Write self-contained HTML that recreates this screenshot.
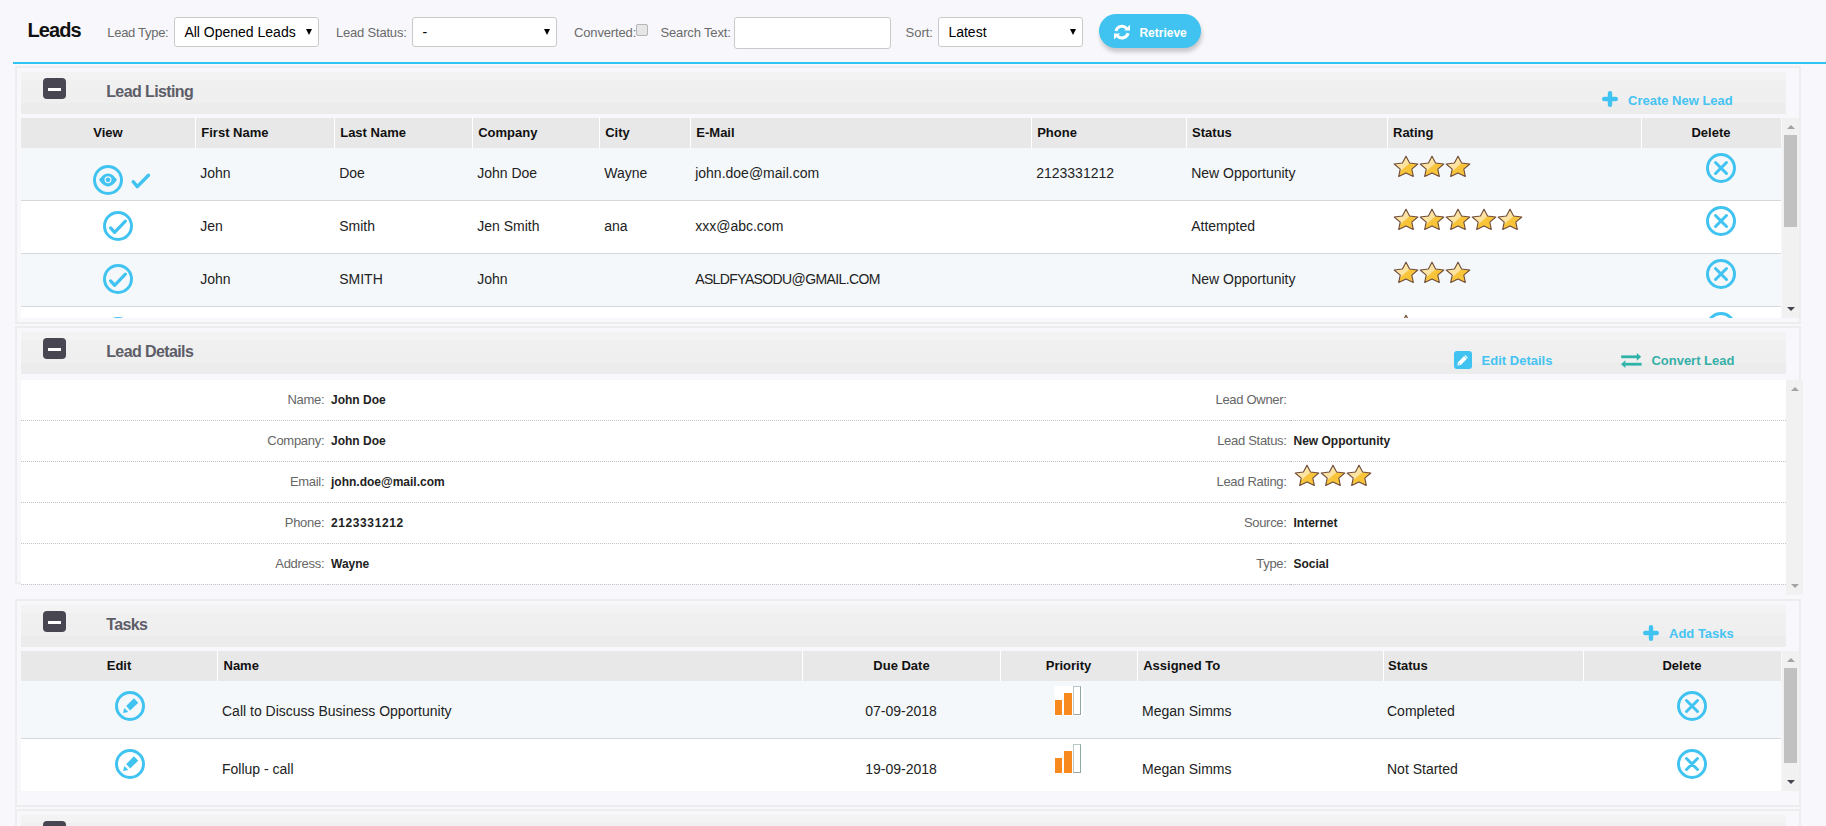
<!DOCTYPE html><html><head><meta charset="utf-8"><style>html,body{margin:0;padding:0;}body{width:1826px;height:826px;overflow:hidden;position:relative;background:#f8f8fc;font-family:"Liberation Sans",sans-serif;}.t{position:absolute;white-space:nowrap;}.b{position:absolute;}</style></head><body>
<svg width="0" height="0" style="position:absolute"><defs>
<linearGradient id="sg" x1="0" y1="0" x2="1" y2="1"><stop offset="0.48" stop-color="#fde3a2"/><stop offset="0.52" stop-color="#f8c43a"/></linearGradient>
<path id="star" d="M13.0 1.2 L16.6 8.0 L24.8 9.0 L18.8 14.1 L20.3 21.4 L13.0 17.9 L5.7 21.4 L7.2 14.1 L1.2 9.0 L9.4 8.0Z"/>
</defs></svg>
<div class="t" style="left:27.5px;top:18.07px;font-size:20px;line-height:24px;font-weight:700;color:#111;letter-spacing:-0.9px;">Leads</div>
<div class="t" style="left:107.3px;top:24.50px;font-size:13px;line-height:16px;font-weight:400;color:#6a6a6a;letter-spacing:-0.3px;">Lead Type:</div>
<div class="b" style="left:174px;top:17px;width:145px;height:30px;background:#fff;border:1px solid #c9c9c9;border-radius:3px;box-sizing:border-box;"></div>
<div class="t" style="left:184.4px;top:23.65px;font-size:14px;line-height:17px;font-weight:400;color:#000;letter-spacing:0px;">All Opened Leads</div>
<div class="b" style="left:306px;top:29px;width:0;height:0;border-left:3px solid transparent;border-right:3px solid transparent;border-top:6px solid #000;"></div>
<div class="t" style="left:336px;top:24.50px;font-size:13px;line-height:16px;font-weight:400;color:#6a6a6a;letter-spacing:-0.2px;">Lead Status:</div>
<div class="b" style="left:412px;top:17px;width:145px;height:30px;background:#fff;border:1px solid #c9c9c9;border-radius:3px;box-sizing:border-box;"></div>
<div class="t" style="left:422.4px;top:23.65px;font-size:14px;line-height:17px;font-weight:400;color:#000;letter-spacing:0px;">-</div>
<div class="b" style="left:544px;top:29px;width:0;height:0;border-left:3px solid transparent;border-right:3px solid transparent;border-top:6px solid #000;"></div>
<div class="t" style="left:574px;top:24.50px;font-size:13px;line-height:16px;font-weight:400;color:#6a6a6a;letter-spacing:-0.15px;">Converted:</div>
<div class="b" style="left:636px;top:24px;width:12px;height:12px;background:#e6e6e6;border:1px solid #b5b5b5;border-radius:2px;box-sizing:border-box;"></div>
<div class="t" style="left:660.5px;top:24.50px;font-size:13px;line-height:16px;font-weight:400;color:#6a6a6a;letter-spacing:-0.15px;">Search Text:</div>
<div class="b" style="left:734px;top:17px;width:157px;height:32px;background:#fff;border:1px solid #c9c9c9;border-radius:3px;box-sizing:border-box;"></div>
<div class="t" style="left:905.5px;top:24.50px;font-size:13px;line-height:16px;font-weight:400;color:#6a6a6a;letter-spacing:0px;">Sort:</div>
<div class="b" style="left:938px;top:17px;width:145px;height:30px;background:#fff;border:1px solid #c9c9c9;border-radius:3px;box-sizing:border-box;"></div>
<div class="t" style="left:948.4px;top:23.65px;font-size:14px;line-height:17px;font-weight:400;color:#000;letter-spacing:0px;">Latest</div>
<div class="b" style="left:1070px;top:29px;width:0;height:0;border-left:3px solid transparent;border-right:3px solid transparent;border-top:6px solid #000;"></div>
<div class="b" style="left:1099px;top:14px;width:102px;height:34px;background:#40c3f0;border-radius:17px;box-shadow:1px 4px 4px rgba(0,0,0,0.2);"></div>
<svg class="b" style="left:1114px;top:24.4px" width="16" height="16" viewBox="0 0 16 16"><path d="M1.9 7.0 A6.3 6.3 0 0 1 12.8 4.4" fill="none" stroke="#fff" stroke-width="3"/><path d="M16 0.7 L16 6.6 L10.1 6.6Z" fill="#fff"/><path d="M14.1 9.2 A6.3 6.3 0 0 1 3.2 11.8" fill="none" stroke="#fff" stroke-width="3"/><path d="M0 15.6 L0 9.4 L6.2 9.4Z" fill="#fff"/></svg>
<div class="t" style="left:1139.4px;top:25.64px;font-size:12px;line-height:14px;font-weight:700;color:#fff;letter-spacing:0px;">Retrieve</div>
<div class="b" style="left:13px;top:62px;width:1813px;height:2px;background:#2ec3f0;"></div>
<div class="b" style="left:15px;top:66px;width:1786px;height:258px;border:2px solid #ededed;box-sizing:border-box;"></div>
<div class="b" style="left:21px;top:72px;width:1765px;height:42px;background:linear-gradient(#f3f3f3 0,#f3f3f3 8px,#f0f0f0 8px,#efefef 31px,#ececec 31px,#ececec 42px);"></div>
<div class="b" style="left:43px;top:78px;width:23px;height:21px;background:#474651;border-radius:4px;"></div>
<div class="b" style="left:48px;top:87.5px;width:13px;height:3.0px;background:#fff;"></div>
<div class="t" style="left:106.2px;top:81.96px;font-size:16px;line-height:19px;font-weight:700;color:#5d5d68;letter-spacing:-0.6px;">Lead Listing</div>
<svg class="b" style="left:1602px;top:91px" width="16" height="16" viewBox="0 0 16 16"><path d="M8 2.2 V13.8 M2.2 8 H13.8" stroke="#40c3f0" stroke-width="4.4" stroke-linecap="round"/></svg>
<div class="t" style="left:1628px;top:92.50px;font-size:13px;line-height:16px;font-weight:700;color:#45c3f2;letter-spacing:0px;">Create New Lead</div>
<div class="b" style="left:21px;top:118px;width:1760px;height:30px;background:#e8e8e8;"></div>
<div class="b" style="left:195px;top:118px;width:1px;height:30px;background:#fff;"></div>
<div class="b" style="left:334px;top:118px;width:1px;height:30px;background:#fff;"></div>
<div class="b" style="left:472px;top:118px;width:1px;height:30px;background:#fff;"></div>
<div class="b" style="left:599px;top:118px;width:1px;height:30px;background:#fff;"></div>
<div class="b" style="left:690px;top:118px;width:1px;height:30px;background:#fff;"></div>
<div class="b" style="left:1031px;top:118px;width:1px;height:30px;background:#fff;"></div>
<div class="b" style="left:1186px;top:118px;width:1px;height:30px;background:#fff;"></div>
<div class="b" style="left:1387px;top:118px;width:1px;height:30px;background:#fff;"></div>
<div class="b" style="left:1641px;top:118px;width:1px;height:30px;background:#fff;"></div>
<div class="t" style="left:-192px;width:600px;text-align:center;top:124.50px;font-size:13px;line-height:16px;font-weight:700;color:#111;letter-spacing:0px;">View</div>
<div class="t" style="left:201.3px;top:124.50px;font-size:13px;line-height:16px;font-weight:700;color:#111;letter-spacing:0px;">First Name</div>
<div class="t" style="left:340.2px;top:124.50px;font-size:13px;line-height:16px;font-weight:700;color:#111;letter-spacing:0px;">Last Name</div>
<div class="t" style="left:478.2px;top:124.50px;font-size:13px;line-height:16px;font-weight:700;color:#111;letter-spacing:0px;">Company</div>
<div class="t" style="left:605.2px;top:124.50px;font-size:13px;line-height:16px;font-weight:700;color:#111;letter-spacing:0px;">City</div>
<div class="t" style="left:696.3px;top:124.50px;font-size:13px;line-height:16px;font-weight:700;color:#111;letter-spacing:0px;">E-Mail</div>
<div class="t" style="left:1037.2px;top:124.50px;font-size:13px;line-height:16px;font-weight:700;color:#111;letter-spacing:0px;">Phone</div>
<div class="t" style="left:1192.1px;top:124.50px;font-size:13px;line-height:16px;font-weight:700;color:#111;letter-spacing:0px;">Status</div>
<div class="t" style="left:1393px;top:124.50px;font-size:13px;line-height:16px;font-weight:700;color:#111;letter-spacing:0px;">Rating</div>
<div class="t" style="left:1411px;width:600px;text-align:center;top:124.50px;font-size:13px;line-height:16px;font-weight:700;color:#111;letter-spacing:0px;">Delete</div>
<div class="b" style="left:0;top:148px;width:1826px;height:170px;overflow:hidden;">
<div class="b" style="left:21px;top:0px;width:1760px;height:52px;background:#f4f8fb;border-bottom:1px solid #d8d8d8;"></div>
<div class="t" style="left:200.2px;top:16.65px;font-size:14px;line-height:17px;font-weight:400;color:#222;letter-spacing:0px;">John</div>
<div class="t" style="left:339.2px;top:16.65px;font-size:14px;line-height:17px;font-weight:400;color:#222;letter-spacing:0px;">Doe</div>
<div class="t" style="left:477.2px;top:16.65px;font-size:14px;line-height:17px;font-weight:400;color:#222;letter-spacing:0px;">John Doe</div>
<div class="t" style="left:604.2px;top:16.65px;font-size:14px;line-height:17px;font-weight:400;color:#222;letter-spacing:0px;">Wayne</div>
<div class="t" style="left:695.2px;top:16.65px;font-size:14px;line-height:17px;font-weight:400;color:#222;letter-spacing:0px;">john.doe@mail.com</div>
<div class="t" style="left:1036.2px;top:16.65px;font-size:14px;line-height:17px;font-weight:400;color:#222;letter-spacing:0px;">2123331212</div>
<div class="t" style="left:1191.2px;top:16.65px;font-size:14px;line-height:17px;font-weight:400;color:#222;letter-spacing:0px;">New Opportunity</div>
<svg class="b" style="left:92px;top:16px" width="32" height="32" viewBox="0 0 32 32"><circle cx="16" cy="16" r="13.5" fill="none" stroke="#40c3f0" stroke-width="3"/><path d="M7 15.8 C9.5 12.2 12.5 9.4 16 9.4 C19.5 9.4 22.5 12.2 25 15.8 C22.5 19.6 19.5 22.4 16 22.4 C12.5 22.4 9.5 19.6 7 15.8Z" fill="#40c3f0"/><circle cx="16" cy="15.8" r="2.9" fill="none" stroke="#f4f8fb" stroke-width="1.1"/></svg>
<svg class="b" style="left:130px;top:24px" width="21" height="17" viewBox="0 0 21 17"><path d="M3.2 9.7 L7.3 14.6 L18.5 3.2" fill="none" stroke="#40c3f0" stroke-width="3.4" stroke-linecap="round" stroke-linejoin="round"/></svg>
<svg class="b" style="left:1393px;top:7px" width="26" height="23" viewBox="0 0 26 23"><use href="#star" fill="url(#sg)" stroke="#6e4b3a" stroke-width="1.1" stroke-linejoin="round"/></svg>
<svg class="b" style="left:1419px;top:7px" width="26" height="23" viewBox="0 0 26 23"><use href="#star" fill="url(#sg)" stroke="#6e4b3a" stroke-width="1.1" stroke-linejoin="round"/></svg>
<svg class="b" style="left:1445px;top:7px" width="26" height="23" viewBox="0 0 26 23"><use href="#star" fill="url(#sg)" stroke="#6e4b3a" stroke-width="1.1" stroke-linejoin="round"/></svg>
<svg class="b" style="left:1705px;top:4px" width="32" height="32" viewBox="0 0 32 32"><circle cx="16" cy="16" r="13.5" fill="none" stroke="#40c3f0" stroke-width="3"/><path d="M10.5 10.5 L21.5 21.5 M21.5 10.5 L10.5 21.5" fill="none" stroke="#40c3f0" stroke-width="3" stroke-linecap="round"/></svg>
<div class="b" style="left:21px;top:53px;width:1760px;height:52px;background:#fff;border-bottom:1px solid #d8d8d8;"></div>
<div class="t" style="left:200.2px;top:69.65px;font-size:14px;line-height:17px;font-weight:400;color:#222;letter-spacing:0px;">Jen</div>
<div class="t" style="left:339.2px;top:69.65px;font-size:14px;line-height:17px;font-weight:400;color:#222;letter-spacing:0px;">Smith</div>
<div class="t" style="left:477.2px;top:69.65px;font-size:14px;line-height:17px;font-weight:400;color:#222;letter-spacing:0px;">Jen Smith</div>
<div class="t" style="left:604.2px;top:69.65px;font-size:14px;line-height:17px;font-weight:400;color:#222;letter-spacing:0px;">ana</div>
<div class="t" style="left:695.2px;top:69.65px;font-size:14px;line-height:17px;font-weight:400;color:#222;letter-spacing:0px;">xxx@abc.com</div>
<div class="t" style="left:1191.2px;top:69.65px;font-size:14px;line-height:17px;font-weight:400;color:#222;letter-spacing:0px;">Attempted</div>
<svg class="b" style="left:102px;top:62px" width="32" height="32" viewBox="0 0 32 32"><circle cx="16" cy="16" r="13.5" fill="none" stroke="#40c3f0" stroke-width="3"/><path d="M8.6 17.9 L12.6 22.4 L23.4 11.2" fill="none" stroke="#40c3f0" stroke-width="3.2" stroke-linecap="round" stroke-linejoin="round"/></svg>
<svg class="b" style="left:1393px;top:60px" width="26" height="23" viewBox="0 0 26 23"><use href="#star" fill="url(#sg)" stroke="#6e4b3a" stroke-width="1.1" stroke-linejoin="round"/></svg>
<svg class="b" style="left:1419px;top:60px" width="26" height="23" viewBox="0 0 26 23"><use href="#star" fill="url(#sg)" stroke="#6e4b3a" stroke-width="1.1" stroke-linejoin="round"/></svg>
<svg class="b" style="left:1445px;top:60px" width="26" height="23" viewBox="0 0 26 23"><use href="#star" fill="url(#sg)" stroke="#6e4b3a" stroke-width="1.1" stroke-linejoin="round"/></svg>
<svg class="b" style="left:1471px;top:60px" width="26" height="23" viewBox="0 0 26 23"><use href="#star" fill="url(#sg)" stroke="#6e4b3a" stroke-width="1.1" stroke-linejoin="round"/></svg>
<svg class="b" style="left:1497px;top:60px" width="26" height="23" viewBox="0 0 26 23"><use href="#star" fill="url(#sg)" stroke="#6e4b3a" stroke-width="1.1" stroke-linejoin="round"/></svg>
<svg class="b" style="left:1705px;top:57px" width="32" height="32" viewBox="0 0 32 32"><circle cx="16" cy="16" r="13.5" fill="none" stroke="#40c3f0" stroke-width="3"/><path d="M10.5 10.5 L21.5 21.5 M21.5 10.5 L10.5 21.5" fill="none" stroke="#40c3f0" stroke-width="3" stroke-linecap="round"/></svg>
<div class="b" style="left:21px;top:106px;width:1760px;height:52px;background:#f4f8fb;border-bottom:1px solid #d8d8d8;"></div>
<div class="t" style="left:200.2px;top:122.65px;font-size:14px;line-height:17px;font-weight:400;color:#222;letter-spacing:0px;">John</div>
<div class="t" style="left:339.2px;top:122.65px;font-size:14px;line-height:17px;font-weight:400;color:#222;letter-spacing:0px;">SMITH</div>
<div class="t" style="left:477.2px;top:122.65px;font-size:14px;line-height:17px;font-weight:400;color:#222;letter-spacing:0px;">John</div>
<div class="t" style="left:695.2px;top:122.65px;font-size:14px;line-height:17px;font-weight:400;color:#222;letter-spacing:-0.62px;">ASLDFYASODU@GMAIL.COM</div>
<div class="t" style="left:1191.2px;top:122.65px;font-size:14px;line-height:17px;font-weight:400;color:#222;letter-spacing:0px;">New Opportunity</div>
<svg class="b" style="left:102px;top:115px" width="32" height="32" viewBox="0 0 32 32"><circle cx="16" cy="16" r="13.5" fill="none" stroke="#40c3f0" stroke-width="3"/><path d="M8.6 17.9 L12.6 22.4 L23.4 11.2" fill="none" stroke="#40c3f0" stroke-width="3.2" stroke-linecap="round" stroke-linejoin="round"/></svg>
<svg class="b" style="left:1393px;top:113px" width="26" height="23" viewBox="0 0 26 23"><use href="#star" fill="url(#sg)" stroke="#6e4b3a" stroke-width="1.1" stroke-linejoin="round"/></svg>
<svg class="b" style="left:1419px;top:113px" width="26" height="23" viewBox="0 0 26 23"><use href="#star" fill="url(#sg)" stroke="#6e4b3a" stroke-width="1.1" stroke-linejoin="round"/></svg>
<svg class="b" style="left:1445px;top:113px" width="26" height="23" viewBox="0 0 26 23"><use href="#star" fill="url(#sg)" stroke="#6e4b3a" stroke-width="1.1" stroke-linejoin="round"/></svg>
<svg class="b" style="left:1705px;top:110px" width="32" height="32" viewBox="0 0 32 32"><circle cx="16" cy="16" r="13.5" fill="none" stroke="#40c3f0" stroke-width="3"/><path d="M10.5 10.5 L21.5 21.5 M21.5 10.5 L10.5 21.5" fill="none" stroke="#40c3f0" stroke-width="3" stroke-linecap="round"/></svg>
<div class="b" style="left:21px;top:159px;width:1760px;height:52px;background:#fff;border-bottom:1px solid #d8d8d8;"></div>
<svg class="b" style="left:102px;top:168px" width="32" height="32" viewBox="0 0 32 32"><circle cx="16" cy="16" r="13.5" fill="none" stroke="#40c3f0" stroke-width="3"/><path d="M8.6 17.9 L12.6 22.4 L23.4 11.2" fill="none" stroke="#40c3f0" stroke-width="3.2" stroke-linecap="round" stroke-linejoin="round"/></svg>
<svg class="b" style="left:1393px;top:166px" width="26" height="23" viewBox="0 0 26 23"><use href="#star" fill="url(#sg)" stroke="#6e4b3a" stroke-width="1.1" stroke-linejoin="round"/></svg>
<svg class="b" style="left:1705px;top:163px" width="32" height="32" viewBox="0 0 32 32"><circle cx="16" cy="16" r="13.5" fill="none" stroke="#40c3f0" stroke-width="3"/><path d="M10.5 10.5 L21.5 21.5 M21.5 10.5 L10.5 21.5" fill="none" stroke="#40c3f0" stroke-width="3" stroke-linecap="round"/></svg>
</div>
<div class="b" style="left:1782px;top:118px;width:17px;height:200px;background:#f1f1f1;"></div>
<div class="b" style="left:1786.5px;top:125px;width:0;height:0;border-left:4px solid transparent;border-right:4px solid transparent;border-bottom:4px solid #a3a3a3;"></div>
<div class="b" style="left:1786.5px;top:307px;width:0;height:0;border-left:4px solid transparent;border-right:4px solid transparent;border-top:4px solid #46454f;"></div>
<div class="b" style="left:1784px;top:135px;width:13px;height:92px;background:#c1c1c1;"></div>
<div class="b" style="left:15px;top:326px;width:1786px;height:258px;border:2px solid #ededed;box-sizing:border-box;"></div>
<div class="b" style="left:21px;top:332px;width:1765px;height:42px;background:linear-gradient(#f3f3f3 0,#f3f3f3 8px,#f0f0f0 8px,#efefef 31px,#ececec 31px,#ececec 42px);"></div>
<div class="b" style="left:43px;top:338px;width:23px;height:21px;background:#474651;border-radius:4px;"></div>
<div class="b" style="left:48px;top:347.5px;width:13px;height:3.0px;background:#fff;"></div>
<div class="t" style="left:106.2px;top:341.96px;font-size:16px;line-height:19px;font-weight:700;color:#5d5d68;letter-spacing:-0.6px;">Lead Details</div>
<div class="b" style="left:1454px;top:351px;width:17.5px;height:17.5px;background:#40c3f0;border-radius:3px;"></div>
<svg class="b" style="left:1454px;top:351px" width="18" height="18" viewBox="0 0 18 18"><path d="M3.4 14.6 L4.0 11.2 L11.2 4.0 L14.0 6.8 L6.8 14.0Z" fill="#fff"/><path d="M10.2 5.0 L13.0 7.8" stroke="#40c3f0" stroke-width="0.9"/><path d="M4.6 12.0 L6.0 13.4" stroke="#40c3f0" stroke-width="0.8"/></svg>
<div class="t" style="left:1481.6px;top:352.50px;font-size:13px;line-height:16px;font-weight:700;color:#45c3f2;letter-spacing:0px;">Edit Details</div>
<svg class="b" style="left:1620px;top:352px" width="23" height="17" viewBox="0 0 23 17"><path d="M1.2 4.8 H17" stroke="#2fb3a9" stroke-width="2.8"/><path d="M16.8 1 L21.2 4.8 L16.8 8.8Z" fill="#2fb3a9"/><path d="M5.2 12.2 H21.6" stroke="#2fb3a9" stroke-width="2.8"/><path d="M5.4 8.2 L1.0 12.2 L5.4 16Z" fill="#2fb3a9"/></svg>
<div class="t" style="left:1651.4px;top:352.50px;font-size:13px;line-height:16px;font-weight:700;color:#36afa7;letter-spacing:0px;">Convert Lead</div>
<div class="b" style="left:21px;top:380px;width:1765px;height:204px;background:#fff;"></div>
<div class="b" style="left:21px;top:420px;width:307px;height:0;border-top:1px dotted #c4c4c4;"></div>
<div class="b" style="left:328px;top:420px;width:591px;height:0;border-top:1px dotted #c4c4c4;"></div>
<div class="b" style="left:919px;top:420px;width:371px;height:0;border-top:1px dotted #c4c4c4;"></div>
<div class="b" style="left:1290px;top:420px;width:496px;height:0;border-top:1px dotted #c4c4c4;"></div>
<div class="t" style="left:-275.8px;width:600px;text-align:right;top:391.50px;font-size:13px;line-height:16px;font-weight:400;color:#666;letter-spacing:-0.3px;">Name:</div>
<div class="t" style="left:331px;top:392.84px;font-size:12px;line-height:14px;font-weight:700;color:#222;letter-spacing:0px;">John Doe</div>
<div class="t" style="left:686.5999999999999px;width:600px;text-align:right;top:391.50px;font-size:13px;line-height:16px;font-weight:400;color:#666;letter-spacing:-0.3px;">Lead Owner:</div>
<div class="b" style="left:21px;top:461px;width:307px;height:0;border-top:1px dotted #c4c4c4;"></div>
<div class="b" style="left:328px;top:461px;width:591px;height:0;border-top:1px dotted #c4c4c4;"></div>
<div class="b" style="left:919px;top:461px;width:371px;height:0;border-top:1px dotted #c4c4c4;"></div>
<div class="b" style="left:1290px;top:461px;width:496px;height:0;border-top:1px dotted #c4c4c4;"></div>
<div class="t" style="left:-275.8px;width:600px;text-align:right;top:432.50px;font-size:13px;line-height:16px;font-weight:400;color:#666;letter-spacing:-0.3px;">Company:</div>
<div class="t" style="left:331px;top:433.84px;font-size:12px;line-height:14px;font-weight:700;color:#222;letter-spacing:0px;">John Doe</div>
<div class="t" style="left:686.5999999999999px;width:600px;text-align:right;top:432.50px;font-size:13px;line-height:16px;font-weight:400;color:#666;letter-spacing:-0.3px;">Lead Status:</div>
<div class="t" style="left:1293.5px;top:433.84px;font-size:12px;line-height:14px;font-weight:700;color:#222;letter-spacing:0px;">New Opportunity</div>
<div class="b" style="left:21px;top:502px;width:307px;height:0;border-top:1px dotted #c4c4c4;"></div>
<div class="b" style="left:328px;top:502px;width:591px;height:0;border-top:1px dotted #c4c4c4;"></div>
<div class="b" style="left:919px;top:502px;width:371px;height:0;border-top:1px dotted #c4c4c4;"></div>
<div class="b" style="left:1290px;top:502px;width:496px;height:0;border-top:1px dotted #c4c4c4;"></div>
<div class="t" style="left:-275.8px;width:600px;text-align:right;top:473.50px;font-size:13px;line-height:16px;font-weight:400;color:#666;letter-spacing:-0.3px;">Email:</div>
<div class="t" style="left:331px;top:474.84px;font-size:12px;line-height:14px;font-weight:700;color:#222;letter-spacing:0px;">john.doe@mail.com</div>
<div class="t" style="left:686.5999999999999px;width:600px;text-align:right;top:473.50px;font-size:13px;line-height:16px;font-weight:400;color:#666;letter-spacing:-0.3px;">Lead Rating:</div>
<svg class="b" style="left:1294px;top:464px" width="26" height="23" viewBox="0 0 26 23"><use href="#star" fill="url(#sg)" stroke="#6e4b3a" stroke-width="1.1" stroke-linejoin="round"/></svg>
<svg class="b" style="left:1320px;top:464px" width="26" height="23" viewBox="0 0 26 23"><use href="#star" fill="url(#sg)" stroke="#6e4b3a" stroke-width="1.1" stroke-linejoin="round"/></svg>
<svg class="b" style="left:1346px;top:464px" width="26" height="23" viewBox="0 0 26 23"><use href="#star" fill="url(#sg)" stroke="#6e4b3a" stroke-width="1.1" stroke-linejoin="round"/></svg>
<div class="b" style="left:21px;top:543px;width:307px;height:0;border-top:1px dotted #c4c4c4;"></div>
<div class="b" style="left:328px;top:543px;width:591px;height:0;border-top:1px dotted #c4c4c4;"></div>
<div class="b" style="left:919px;top:543px;width:371px;height:0;border-top:1px dotted #c4c4c4;"></div>
<div class="b" style="left:1290px;top:543px;width:496px;height:0;border-top:1px dotted #c4c4c4;"></div>
<div class="t" style="left:-275.8px;width:600px;text-align:right;top:514.50px;font-size:13px;line-height:16px;font-weight:400;color:#666;letter-spacing:-0.3px;">Phone:</div>
<div class="t" style="left:331px;top:515.84px;font-size:12px;line-height:14px;font-weight:700;color:#222;letter-spacing:0.6px;">2123331212</div>
<div class="t" style="left:686.5999999999999px;width:600px;text-align:right;top:514.50px;font-size:13px;line-height:16px;font-weight:400;color:#666;letter-spacing:-0.3px;">Source:</div>
<div class="t" style="left:1293.5px;top:515.84px;font-size:12px;line-height:14px;font-weight:700;color:#222;letter-spacing:0px;">Internet</div>
<div class="b" style="left:21px;top:584px;width:307px;height:0;border-top:1px dotted #c4c4c4;"></div>
<div class="b" style="left:328px;top:584px;width:591px;height:0;border-top:1px dotted #c4c4c4;"></div>
<div class="b" style="left:919px;top:584px;width:371px;height:0;border-top:1px dotted #c4c4c4;"></div>
<div class="b" style="left:1290px;top:584px;width:496px;height:0;border-top:1px dotted #c4c4c4;"></div>
<div class="t" style="left:-275.8px;width:600px;text-align:right;top:555.50px;font-size:13px;line-height:16px;font-weight:400;color:#666;letter-spacing:-0.3px;">Address:</div>
<div class="t" style="left:331px;top:556.84px;font-size:12px;line-height:14px;font-weight:700;color:#222;letter-spacing:0px;">Wayne</div>
<div class="t" style="left:686.5999999999999px;width:600px;text-align:right;top:555.50px;font-size:13px;line-height:16px;font-weight:400;color:#666;letter-spacing:-0.3px;">Type:</div>
<div class="t" style="left:1293.5px;top:556.84px;font-size:12px;line-height:14px;font-weight:700;color:#222;letter-spacing:0px;">Social</div>
<div class="b" style="left:1786px;top:380px;width:17px;height:215px;background:#f1f1f1;"></div>
<div class="b" style="left:1790.5px;top:387px;width:0;height:0;border-left:4px solid transparent;border-right:4px solid transparent;border-bottom:4px solid #a3a3a3;"></div>
<div class="b" style="left:1790.5px;top:584px;width:0;height:0;border-left:4px solid transparent;border-right:4px solid transparent;border-top:4px solid #a3a3a3;"></div>
<div class="b" style="left:15px;top:599px;width:1786px;height:208px;border:2px solid #ededed;box-sizing:border-box;"></div>
<div class="b" style="left:21px;top:605px;width:1765px;height:42px;background:linear-gradient(#f3f3f3 0,#f3f3f3 8px,#f0f0f0 8px,#efefef 31px,#ececec 31px,#ececec 42px);"></div>
<div class="b" style="left:43px;top:611px;width:23px;height:21px;background:#474651;border-radius:4px;"></div>
<div class="b" style="left:48px;top:620.5px;width:13px;height:3.0px;background:#fff;"></div>
<div class="t" style="left:106.2px;top:614.96px;font-size:16px;line-height:19px;font-weight:700;color:#5d5d68;letter-spacing:-0.6px;">Tasks</div>
<svg class="b" style="left:1642.5px;top:624.5px" width="16" height="16" viewBox="0 0 16 16"><path d="M8 2.2 V13.8 M2.2 8 H13.8" stroke="#40c3f0" stroke-width="4.4" stroke-linecap="round"/></svg>
<div class="t" style="left:1669px;top:625.50px;font-size:13px;line-height:16px;font-weight:700;color:#45c3f2;letter-spacing:0px;">Add Tasks</div>
<div class="b" style="left:21px;top:651px;width:1760px;height:30px;background:#e8e8e8;"></div>
<div class="b" style="left:217px;top:651px;width:1px;height:30px;background:#fff;"></div>
<div class="b" style="left:802px;top:651px;width:1px;height:30px;background:#fff;"></div>
<div class="b" style="left:1000px;top:651px;width:1px;height:30px;background:#fff;"></div>
<div class="b" style="left:1137px;top:651px;width:1px;height:30px;background:#fff;"></div>
<div class="b" style="left:1383px;top:651px;width:1px;height:30px;background:#fff;"></div>
<div class="b" style="left:1583px;top:651px;width:1px;height:30px;background:#fff;"></div>
<div class="t" style="left:-181px;width:600px;text-align:center;top:657.50px;font-size:13px;line-height:16px;font-weight:700;color:#111;letter-spacing:0px;">Edit</div>
<div class="t" style="left:223.5px;top:657.50px;font-size:13px;line-height:16px;font-weight:700;color:#111;letter-spacing:0px;">Name</div>
<div class="t" style="left:601.5px;width:600px;text-align:center;top:657.50px;font-size:13px;line-height:16px;font-weight:700;color:#111;letter-spacing:0px;">Due Date</div>
<div class="t" style="left:768.5px;width:600px;text-align:center;top:657.50px;font-size:13px;line-height:16px;font-weight:700;color:#111;letter-spacing:0px;">Priority</div>
<div class="t" style="left:1143.2px;top:657.50px;font-size:13px;line-height:16px;font-weight:700;color:#111;letter-spacing:0px;">Assigned To</div>
<div class="t" style="left:1388px;top:657.50px;font-size:13px;line-height:16px;font-weight:700;color:#111;letter-spacing:0px;">Status</div>
<div class="t" style="left:1382px;width:600px;text-align:center;top:657.50px;font-size:13px;line-height:16px;font-weight:700;color:#111;letter-spacing:0px;">Delete</div>
<div class="b" style="left:0;top:681px;width:1826px;height:110px;overflow:hidden;">
<div class="b" style="left:21px;top:0px;width:1760px;height:57px;background:#f4f8fb;border-bottom:1px solid #d8d8d8;"></div>
<div class="t" style="left:222px;top:21.95px;font-size:14px;line-height:17px;font-weight:400;color:#222;letter-spacing:0px;">Call to Discuss Business Opportunity</div>
<div class="t" style="left:601px;width:600px;text-align:center;top:21.95px;font-size:14px;line-height:17px;font-weight:400;color:#222;letter-spacing:0px;">07-09-2018</div>
<div class="t" style="left:1142px;top:21.95px;font-size:14px;line-height:17px;font-weight:400;color:#222;letter-spacing:0px;">Megan Simms</div>
<div class="t" style="left:1387px;top:21.95px;font-size:14px;line-height:17px;font-weight:400;color:#222;letter-spacing:0px;">Completed</div>
<svg class="b" style="left:115px;top:10px" width="30" height="30" viewBox="0 0 30 30"><circle cx="15" cy="15" r="13.5" fill="none" stroke="#40c3f0" stroke-width="3"/><path d="M11.2 15.1 L18.9 7.3 L23.3 11.7 L15.1 19.4Z" fill="#40c3f0"/><path d="M8.0 22.1 L9.4 16.9 L13.4 20.9Z" fill="#40c3f0"/></svg>
<div class="b" style="left:1054px;top:5px;width:29px;height:30px;background:#fff;"></div>
<div class="b" style="left:1055px;top:19px;width:7px;height:15px;background:#f7891f;"></div>
<div class="b" style="left:1064px;top:12px;width:8px;height:22px;background:#f7891f;"></div>
<div class="b" style="left:1073px;top:5px;width:8px;height:29px;background:#fff;border:1px solid #b9c9c7;border-right-color:#8ea8a4;border-bottom-color:#9aa8a6;box-sizing:border-box;"></div>
<svg class="b" style="left:1675.6px;top:9px" width="32" height="32" viewBox="0 0 32 32"><circle cx="16" cy="16" r="13.5" fill="none" stroke="#40c3f0" stroke-width="3"/><path d="M10.5 10.5 L21.5 21.5 M21.5 10.5 L10.5 21.5" fill="none" stroke="#40c3f0" stroke-width="3" stroke-linecap="round"/></svg>
<div class="b" style="left:21px;top:58px;width:1760px;height:57px;background:#fff;border-bottom:1px solid #d8d8d8;"></div>
<div class="t" style="left:222px;top:79.95px;font-size:14px;line-height:17px;font-weight:400;color:#222;letter-spacing:0px;">Follup - call</div>
<div class="t" style="left:601px;width:600px;text-align:center;top:79.95px;font-size:14px;line-height:17px;font-weight:400;color:#222;letter-spacing:0px;">19-09-2018</div>
<div class="t" style="left:1142px;top:79.95px;font-size:14px;line-height:17px;font-weight:400;color:#222;letter-spacing:0px;">Megan Simms</div>
<div class="t" style="left:1387px;top:79.95px;font-size:14px;line-height:17px;font-weight:400;color:#222;letter-spacing:0px;">Not Started</div>
<svg class="b" style="left:115px;top:68px" width="30" height="30" viewBox="0 0 30 30"><circle cx="15" cy="15" r="13.5" fill="none" stroke="#40c3f0" stroke-width="3"/><path d="M11.2 15.1 L18.9 7.3 L23.3 11.7 L15.1 19.4Z" fill="#40c3f0"/><path d="M8.0 22.1 L9.4 16.9 L13.4 20.9Z" fill="#40c3f0"/></svg>
<div class="b" style="left:1054px;top:63px;width:29px;height:30px;background:#fff;"></div>
<div class="b" style="left:1055px;top:77px;width:7px;height:15px;background:#f7891f;"></div>
<div class="b" style="left:1064px;top:70px;width:8px;height:22px;background:#f7891f;"></div>
<div class="b" style="left:1073px;top:63px;width:8px;height:29px;background:#fff;border:1px solid #b9c9c7;border-right-color:#8ea8a4;border-bottom-color:#9aa8a6;box-sizing:border-box;"></div>
<svg class="b" style="left:1675.6px;top:67px" width="32" height="32" viewBox="0 0 32 32"><circle cx="16" cy="16" r="13.5" fill="none" stroke="#40c3f0" stroke-width="3"/><path d="M10.5 10.5 L21.5 21.5 M21.5 10.5 L10.5 21.5" fill="none" stroke="#40c3f0" stroke-width="3" stroke-linecap="round"/></svg>
</div>
<div class="b" style="left:1782px;top:651px;width:17px;height:140px;background:#f1f1f1;"></div>
<div class="b" style="left:1786.5px;top:658px;width:0;height:0;border-left:4px solid transparent;border-right:4px solid transparent;border-bottom:4px solid #a3a3a3;"></div>
<div class="b" style="left:1786.5px;top:780px;width:0;height:0;border-left:4px solid transparent;border-right:4px solid transparent;border-top:4px solid #46454f;"></div>
<div class="b" style="left:1784px;top:668px;width:13px;height:95px;background:#c1c1c1;"></div>
<div class="b" style="left:15px;top:809px;width:1786px;height:91px;border:2px solid #ededed;box-sizing:border-box;"></div>
<div class="b" style="left:21px;top:815px;width:1765px;height:42px;background:linear-gradient(#f3f3f3 0,#f3f3f3 8px,#f0f0f0 8px);"></div>
<div class="b" style="left:43px;top:821px;width:23px;height:21px;background:#474651;border-radius:4px;"></div>
</body></html>
